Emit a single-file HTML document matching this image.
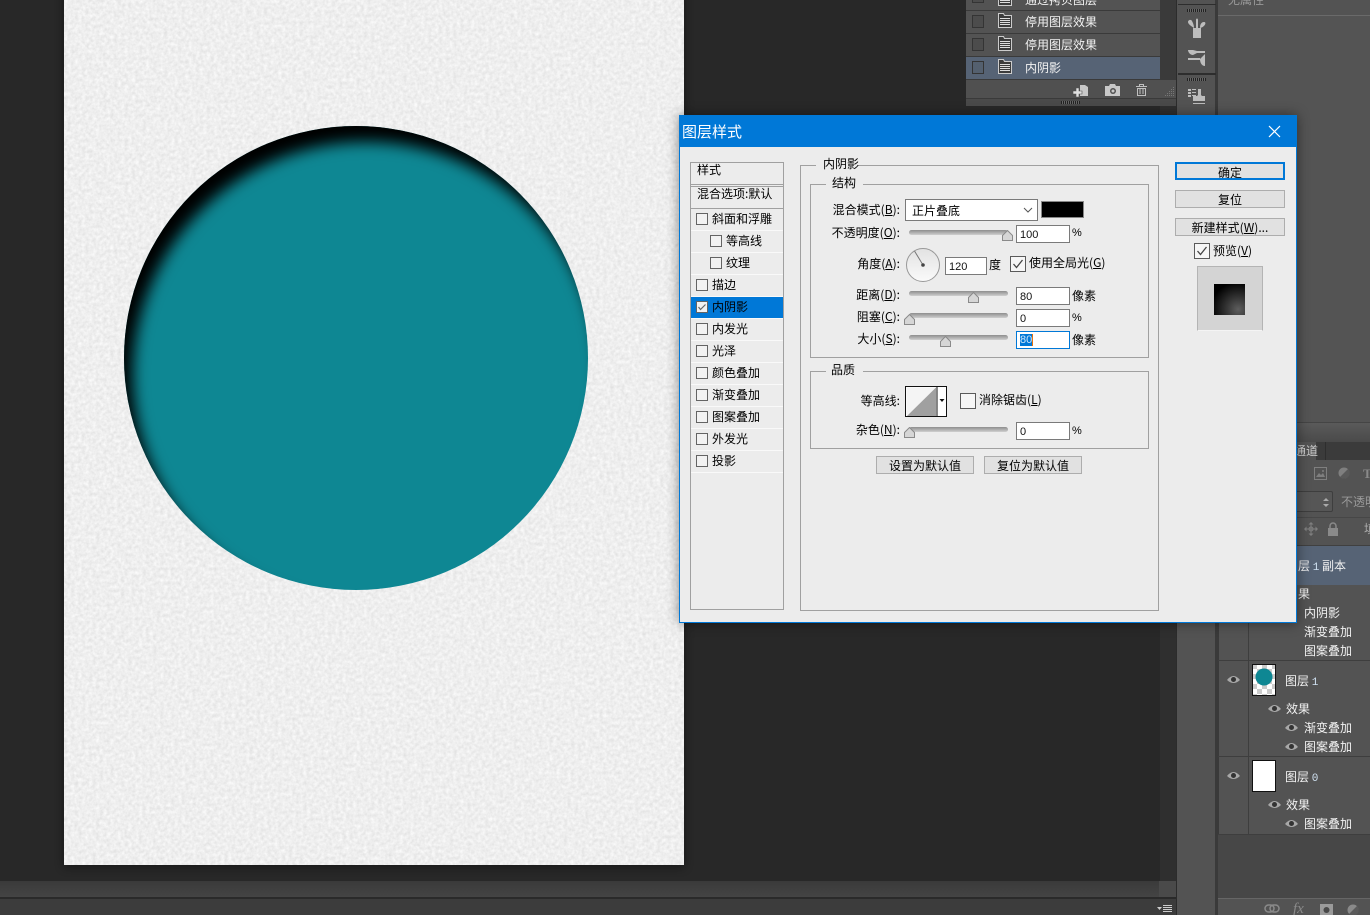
<!DOCTYPE html>
<html><head><meta charset="utf-8"><style>
html,body{margin:0;padding:0;background:#282828}
#r{position:relative;width:1370px;height:915px;overflow:hidden;background:#282828;font:12px/14px "WenQuanYi Zen Hei","Noto Sans CJK SC",sans-serif;color:#000}
#r div,#r svg,#r span.t{position:absolute}
.t{white-space:nowrap;font-size:12px;line-height:14px}
.w{color:#f2f2f2}.g{color:#bbb}
u{text-underline-offset:1px}
.n{font:11px "Liberation Mono",monospace;color:#cfe0f0}
.b{border:1px solid #a0a0a0;box-sizing:border-box}
.c{box-sizing:border-box;width:12px;height:12px;border:1px solid #646464;background:#f2f2f2}
.c2{box-sizing:border-box;width:16px;height:16px;border:1px solid #5a5a5a;background:#f6f6f6}
.sep{height:1px;background:#f9f9f9;left:691px;width:92px}
.i{box-sizing:border-box;background:#fff;border:1px solid #7a7a7a;width:54px;height:18px;left:1016px;padding-left:3px;font:11px/18px "Liberation Sans",sans-serif;color:#111}
.tr{left:909px;width:99px;height:5px;border-radius:3px;background:linear-gradient(#8e8e8e,#b4b4b4 60%,#d0d0d0)}
.btn{box-sizing:border-box;background:#e1e1e1;border:1px solid #adadad;text-align:center;line-height:17px;height:18px}
.lb{text-align:right;right:470px}
.h{left:966px;width:194px;height:22px;background:#535353}
</style></head><body><div id="r">

<!-- canvas -->
<svg style="left:0;top:0" width="1370" height="915" viewBox="0 0 1370 915">
<defs>
<filter id="n" x="0" y="0" width="100%" height="100%" color-interpolation-filters="sRGB"><feTurbulence type="fractalNoise" baseFrequency="0.28" numOctaves="3" seed="4"/><feColorMatrix values="0.13 0 0 0 0.87 0.13 0 0 0 0.87 0.13 0 0 0 0.87 0 0 0 0 1"/></filter>
<filter id="bl" x="-20%" y="-20%" width="140%" height="140%"><feGaussianBlur stdDeviation="7.500"/></filter>
<filter id="ds" x="-5%" y="-5%" width="110%" height="110%"><feGaussianBlur stdDeviation="5"/></filter>
<clipPath id="cc"><circle cx="356" cy="358" r="232"/></clipPath>
</defs>
<rect x="64" y="-8" width="620" height="875" fill="#000" opacity=".45" filter="url(#ds)"/>
<rect x="64" y="0" width="620" height="865" filter="url(#n)"/>
<circle cx="356" cy="358" r="232" fill="#0e8793"/>
<g clip-path="url(#cc)"><path fill-rule="evenodd" filter="url(#bl)" fill="#000" d="M0 0H800V700H0Z M366 142a233 233 0 1 0 .01 0Z"/></g>
</svg>

<!-- bottom bars -->
<div style="left:0;top:881px;width:1176px;height:16px;background:linear-gradient(#3a3a3a,#444)"></div>
<div style="left:0;top:897px;width:1176px;height:2px;background:#2a2a2a"></div>
<div style="left:0;top:899px;width:1176px;height:16px;background:#3c3c3c"></div>
<div style="left:1160px;top:0;width:16px;height:881px;background:#2f2f2f"></div>
<div style="left:1159px;top:881px;width:17px;height:16px;background:#4a4a4a"></div>
<svg style="left:1156px;top:904px" width="17" height="9"><path d="M1 3h5l-2.500 3z" fill="#ccc"/><path d="M7 1.500h9M7 3.500h9M7 5.500h9M7 7.500h9" stroke="#ccc" stroke-width="1"/></svg>

<!-- right dock -->
<div style="left:1176px;top:0;width:42px;height:915px;background:#2c2c2c"></div>
<div style="left:1177px;top:0;width:38px;height:915px;background:#535353"></div>
<div style="left:1215px;top:0;width:3px;height:915px;background:#3a3a3a"></div>
<div style="left:1178px;top:4px;width:38px;height:1px;background:#2d2d2d"></div>
<div style="left:1178px;top:73px;width:38px;height:2px;background:#2d2d2d"></div>
<div style="left:1187px;top:9px;width:19px;height:3px;background:repeating-linear-gradient(90deg,#222 0 1px,#666 1px 2px)"></div>
<div style="left:1187px;top:78px;width:19px;height:3px;background:repeating-linear-gradient(90deg,#222 0 1px,#666 1px 2px)"></div>
<svg style="left:1186px;top:17px" width="22" height="22"><path d="M7 11h8v10H7z" fill="#bdbdbd"/><path d="M8 11C5 9 2 7 2 5s3-3 4-1 2 4 2 7zM10 11V3c0-2 2-2 2 0v8zM14 11c0-3 1-6 4-6 3 0 1 5-4 6z" fill="#bdbdbd"/></svg>
<svg style="left:1187px;top:48px" width="22" height="20"><path d="M1 2h5l4 1h8v2H10L6 7C3 7 1 4 1 2z" fill="#bdbdbd"/><path d="M1 10h12v2H1zM13 11l5-5v12c-3 0-5-3-5-7z" fill="#bdbdbd"/></svg>
<svg style="left:1187px;top:87px" width="22" height="20"><path d="M1 2h3v2H1zM1 5h3v2H1zM1 8h3v2H1zM5 2h4v1H5zM5 5h4v1H5zM5 8h4v1H5z" fill="#bdbdbd"/><path d="M11 2h3v6l1 1h3v5H6V9h4l1-1z" fill="#bdbdbd"/><path d="M6 16h12v1H6z" fill="#bdbdbd"/></svg>

<!-- properties top-right -->
<div style="left:1218px;top:0;width:152px;height:15px;background:#535353"></div>
<div style="left:1218px;top:15px;width:152px;height:1px;background:#6a6a6a"></div>
<div style="left:1218px;top:16px;width:152px;height:426px;background:#545454"></div>
<span class="t" style="left:1228px;top:-7px;color:#999">无属性</span>

<!-- history -->
<div style="left:966px;top:0;width:210px;height:106px;background:#3a3a3a"></div>
<div class="h" style="top:-12px"></div>
<div class="h" style="top:11px"></div>
<div class="h" style="top:34px"></div>
<div class="h" style="top:57px;background:#566375"></div>
<span class="t w" style="left:1025px;top:-7px">通过拷贝图层</span>
<span class="t w" style="left:1025px;top:15px">停用图层效果</span>
<span class="t w" style="left:1025px;top:38px">停用图层效果</span>
<span class="t w" style="left:1025px;top:61px">内阴影</span>
<div style="left:972px;top:-9px;width:12px;height:12px;box-sizing:border-box;border:1px solid #343434;background:#4c4c4c"></div>
<div style="left:972px;top:15px;width:12px;height:13px;box-sizing:border-box;border:1px solid #343434;background:#4c4c4c"></div>
<div style="left:972px;top:38px;width:12px;height:13px;box-sizing:border-box;border:1px solid #343434;background:#4c4c4c"></div>
<div style="left:972px;top:61px;width:12px;height:13px;box-sizing:border-box;border:1px solid #343434;background:#54606f"></div>
<svg style="left:998px;top:-9px" width="15" height="16"><path d="M.5 .5h5l1 2h7v12H.5z" fill="#3c3c3c" stroke="#ccc"/><path d="M2 5.500h10M2 7.500h10M2 9.500h10M2 11.500h10" stroke="#ddd"/></svg>
<svg style="left:998px;top:13px" width="15" height="16"><path d="M.5 .5h5l1 2h7v12H.5z" fill="#3c3c3c" stroke="#ccc"/><path d="M2 5.500h10M2 7.500h10M2 9.500h10M2 11.500h10" stroke="#ddd"/></svg>
<svg style="left:998px;top:36px" width="15" height="16"><path d="M.5 .5h5l1 2h7v12H.5z" fill="#3c3c3c" stroke="#ccc"/><path d="M2 5.500h10M2 7.500h10M2 9.500h10M2 11.500h10" stroke="#ddd"/></svg>
<svg style="left:998px;top:59px" width="15" height="16"><path d="M.5 .5h5l1 2h7v12H.5z" fill="#3c3c3c" stroke="#ccc"/><path d="M2 5.500h10M2 7.500h10M2 9.500h10M2 11.500h10" stroke="#ddd"/></svg>
<div style="left:966px;top:80px;width:210px;height:18px;background:#505050"></div>
<div style="left:966px;top:99px;width:210px;height:7px;background:#4a4a4a"></div>
<div style="left:1061px;top:101px;width:19px;height:3px;background:repeating-linear-gradient(90deg,#222 0 1px,#666 1px 2px)"></div>
<svg style="left:1073px;top:84px" width="16" height="13"><path d="M7 1h5l3 2v9H7z" fill="#c8c8c8"/><path d="M0 7h3V4h3v3h3v3H6v3H3v-3H0z" fill="#e0e0e0" stroke="#505050" stroke-width=".6"/></svg>
<svg style="left:1105px;top:84px" width="16" height="12"><path d="M0 2h4l1-2h5l1 2h4v10H0z" fill="#c8c8c8"/><circle cx="8" cy="7" r="3" fill="#505050"/><circle cx="8" cy="7" r="1.500" fill="#c8c8c8"/></svg>
<svg style="left:1135px;top:83px" width="13" height="13"><path d="M1 3.500h11M4.500 3V1.500h4V3M2.500 5.500h8v7h-8zM5 6v5M8 6v5" fill="none" stroke="#c0c0c0"/></svg>
<svg style="left:1164px;top:86px" width="11" height="11" fill="#777"><path d="M9 1h1v1H9zM7 3h1v1H7zM9 3h1v1H9zM5 5h1v1H5zM7 5h1v1H7zM9 5h1v1H9zM3 7h1v1H3zM5 7h1v1H5zM7 7h1v1H7zM9 7h1v1H9zM1 9h1v1H1zM3 9h1v1H3zM5 9h1v1H5zM7 9h1v1H7zM9 9h1v1H9z"/></svg>

<!-- layers panel -->
<div style="left:1218px;top:442px;width:152px;height:473px;background:#535353"></div>
<div style="left:1218px;top:422px;width:152px;height:1px;background:#454545"></div>
<div style="left:1218px;top:423px;width:152px;height:19px;background:linear-gradient(#5a5a5a,#4a4a4a)"></div>
<div style="left:1218px;top:442px;width:152px;height:18px;background:#3b3b3b"></div>
<div style="left:1218px;top:442px;width:98px;height:19px;background:#535353"></div>
<div style="left:1325px;top:442px;width:1px;height:18px;background:#2e2e2e"></div>
<span class="t" style="left:1294px;top:444px;color:#ccc">通道</span>
<svg style="left:1314px;top:467px" width="13" height="13"><rect x=".5" y=".5" width="12" height="12" fill="none" stroke="#7f7f7f"/><path d="M2 10l3-4 2 2 2-2 2 4z" fill="#7f7f7f"/><circle cx="9" cy="4" r="1" fill="#7f7f7f"/></svg>
<svg style="left:1338px;top:467px" width="12" height="12"><circle cx="6" cy="6" r="5.500" fill="#7f7f7f"/><path d="M2 10L10 2A5.500 5.500 0 0 1 2 10z" fill="#5a5a5a"/></svg>
<span class="t" style="left:1363px;top:467px;color:#8a8a8a;font:bold 13px/14px 'Liberation Serif',serif">T</span>
<div style="left:1280px;top:491px;width:53px;height:21px;box-sizing:border-box;background:#565656;border:1px solid #3e3e3e;border-radius:2px"></div>
<svg style="left:1322px;top:497px" width="8" height="11"><path d="M1 4l3-3 3 3zM1 7l3 3 3-3z" fill="#aaa"/></svg>
<span class="t" style="left:1341px;top:495px;color:#9a9a9a">不透明</span>
<div style="left:1218px;top:517px;width:152px;height:1px;background:#474747"></div>
<svg style="left:1304px;top:522px" width="14" height="14"><path d="M7 .5v13M.5 7h13" stroke="#7f7f7f" stroke-width="1" fill="none"/><path d="M7 0l2.500 2.500h-5zM7 14l2.500-2.500h-5zM0 7l2.500-2.500v5zM14 7l-2.500-2.500v5z" fill="#7f7f7f"/><circle cx="7" cy="7" r="2" fill="none" stroke="#7f7f7f"/></svg>
<svg style="left:1327px;top:522px" width="12" height="14"><rect x="1" y="6" width="10" height="8" fill="#8a8a8a"/><path d="M3 6V4a3 3 0 0 1 6 0v2" fill="none" stroke="#8a8a8a" stroke-width="1.500"/></svg>
<span class="t" style="left:1364px;top:522px;color:#aaa">填</span>
<div style="left:1218px;top:545px;width:152px;height:1px;background:#404040"></div>
<div style="left:1218px;top:546px;width:152px;height:39px;background:#566375"></div>
<span class="t w" style="left:1298px;top:559px">层 <span class="n">1</span> 副本</span>
<span class="t w" style="left:1298px;top:587px">果</span>
<span class="t w" style="left:1304px;top:606px">内阴影</span>
<span class="t w" style="left:1304px;top:625px">渐变叠加</span>
<span class="t w" style="left:1304px;top:644px">图案叠加</span>
<div style="left:1218px;top:585px;width:1px;height:249px;background:#3a3a3a"></div>
<div style="left:1248px;top:585px;width:1px;height:249px;background:#3e3e3e"></div>
<div style="left:1218px;top:660px;width:152px;height:1px;background:#3e3e3e"></div>
<div style="left:1218px;top:756px;width:152px;height:1px;background:#3e3e3e"></div>
<div style="left:1218px;top:834px;width:152px;height:65px;background:#474747;border-top:1px solid #3e3e3e;box-sizing:border-box"></div>
<div style="left:1218px;top:898px;width:152px;height:1px;background:#666"></div>
<!-- thumbs -->
<svg style="left:1252px;top:664px" width="24" height="32"><defs><pattern id="ck" width="10" height="10" patternUnits="userSpaceOnUse"><rect width="10" height="10" fill="#fff"/><rect width="5" height="5" fill="#ccc"/><rect x="5" y="5" width="5" height="5" fill="#ccc"/></pattern></defs><rect width="24" height="32" fill="#111"/><rect x="1" y="1" width="22" height="30" fill="url(#ck)"/><circle cx="12" cy="13" r="8.500" fill="#0e8793"/></svg>
<div style="left:1252px;top:760px;width:24px;height:32px;box-sizing:border-box;background:#fff;border:1px solid #111"></div>
<span class="t w" style="left:1285px;top:674px">图层 <span class="n">1</span></span>
<span class="t w" style="left:1285px;top:770px">图层 <span class="n">0</span></span>
<span class="t w" style="left:1286px;top:702px">效果</span>
<span class="t w" style="left:1304px;top:721px">渐变叠加</span>
<span class="t w" style="left:1304px;top:740px">图案叠加</span>
<span class="t w" style="left:1286px;top:798px">效果</span>
<span class="t w" style="left:1304px;top:817px">图案叠加</span>
<!-- eyes -->
<svg style="left:1227px;top:675px" width="13" height="10"><path d="M0 5Q6.500-3 13 5 6.500 11 0 5z" fill="#a8a8a8"/><circle cx="6.500" cy="4.500" r="2.500" fill="#333"/></svg>
<svg style="left:1227px;top:771px" width="13" height="10"><path d="M0 5Q6.500-3 13 5 6.500 11 0 5z" fill="#a8a8a8"/><circle cx="6.500" cy="4.500" r="2.500" fill="#333"/></svg>
<svg style="left:1268px;top:704px" width="13" height="10"><path d="M0 5Q6.500-3 13 5 6.500 11 0 5z" fill="#a8a8a8"/><circle cx="6.500" cy="4.500" r="2.500" fill="#333"/></svg>
<svg style="left:1285px;top:723px" width="13" height="10"><path d="M0 5Q6.500-3 13 5 6.500 11 0 5z" fill="#a8a8a8"/><circle cx="6.500" cy="4.500" r="2.500" fill="#333"/></svg>
<svg style="left:1285px;top:742px" width="13" height="10"><path d="M0 5Q6.500-3 13 5 6.500 11 0 5z" fill="#a8a8a8"/><circle cx="6.500" cy="4.500" r="2.500" fill="#333"/></svg>
<svg style="left:1268px;top:800px" width="13" height="10"><path d="M0 5Q6.500-3 13 5 6.500 11 0 5z" fill="#a8a8a8"/><circle cx="6.500" cy="4.500" r="2.500" fill="#333"/></svg>
<svg style="left:1285px;top:819px" width="13" height="10"><path d="M0 5Q6.500-3 13 5 6.500 11 0 5z" fill="#a8a8a8"/><circle cx="6.500" cy="4.500" r="2.500" fill="#333"/></svg>
<!-- layer footer -->
<svg style="left:1264px;top:904px" width="16" height="10"><rect x="1" y="1" width="9" height="7" rx="3.500" fill="none" stroke="#8a8a8a" stroke-width="1.500"/><rect x="6" y="1" width="9" height="7" rx="3.500" fill="none" stroke="#8a8a8a" stroke-width="1.500"/></svg>
<span class="t" style="left:1293px;top:901px;color:#8a8a8a;font:italic 15px/16px 'Liberation Serif',serif">fx</span>
<svg style="left:1320px;top:904px" width="13" height="11"><rect width="13" height="11" fill="#9a9a9a"/><circle cx="6.500" cy="6" r="3" fill="#484848"/></svg>
<svg style="left:1347px;top:904px" width="12" height="11"><circle cx="6" cy="6" r="5.500" fill="#8a8a8a"/><path d="M2 10L10 2A5.500 5.500 0 0 1 2 10z" fill="#5a5a5a"/></svg>

<!-- dialog -->
<div style="left:679px;top:115px;width:618px;height:508px;box-sizing:border-box;background:#ececec;border:1px solid #0078d7;box-shadow:0 0 12px rgba(0,0,0,.45)"></div>
<div style="left:679px;top:115px;width:618px;height:32px;background:#0078d7"></div>
<span class="t" style="left:682px;top:124px;color:#fff;font-size:15px;line-height:16px">图层样式</span>
<svg style="left:1268px;top:125px" width="13" height="13"><path d="M1 1l11 11M12 1L1 12" stroke="#fff" stroke-width="1.200"/></svg>

<!-- list -->
<div class="b" style="left:690px;top:162px;width:94px;height:448px"></div>
<div style="left:691px;top:184px;width:92px;height:1px;background:#a0a0a0"></div>
<div style="left:691px;top:186px;width:92px;height:1px;background:#a0a0a0"></div>
<div style="left:691px;top:208px;width:92px;height:1px;background:#a0a0a0"></div>
<span class="t" style="left:697px;top:163px">样式</span>
<span class="t" style="left:697px;top:187px">混合选项:默认</span>
<div class="sep" style="top:230px"></div><div class="sep" style="top:252px"></div><div class="sep" style="top:274px"></div><div class="sep" style="top:296px"></div><div class="sep" style="top:318px"></div><div class="sep" style="top:340px"></div><div class="sep" style="top:362px"></div><div class="sep" style="top:384px"></div><div class="sep" style="top:406px"></div><div class="sep" style="top:428px"></div><div class="sep" style="top:450px"></div><div class="sep" style="top:472px"></div>
<div style="left:691px;top:297px;width:92px;height:21px;background:#0078d7"></div>
<div class="c" style="left:696px;top:213px"></div><span class="t" style="left:712px;top:212px">斜面和浮雕</span>
<div class="c" style="left:710px;top:235px"></div><span class="t" style="left:726px;top:234px">等高线</span>
<div class="c" style="left:710px;top:257px"></div><span class="t" style="left:726px;top:256px">纹理</span>
<div class="c" style="left:696px;top:279px"></div><span class="t" style="left:712px;top:278px">描边</span>
<div class="c" style="left:696px;top:301px"></div><svg style="left:697px;top:303px" width="10" height="9"><path d="M1.500 4l2 2.500 5-5" fill="none" stroke="#666" stroke-width="1.200"/></svg><span class="t" style="left:712px;top:300px">内阴影</span>
<div class="c" style="left:696px;top:323px"></div><span class="t" style="left:712px;top:322px">内发光</span>
<div class="c" style="left:696px;top:345px"></div><span class="t" style="left:712px;top:344px">光泽</span>
<div class="c" style="left:696px;top:367px"></div><span class="t" style="left:712px;top:366px">颜色叠加</span>
<div class="c" style="left:696px;top:389px"></div><span class="t" style="left:712px;top:388px">渐变叠加</span>
<div class="c" style="left:696px;top:411px"></div><span class="t" style="left:712px;top:410px">图案叠加</span>
<div class="c" style="left:696px;top:433px"></div><span class="t" style="left:712px;top:432px">外发光</span>
<div class="c" style="left:696px;top:455px"></div><span class="t" style="left:712px;top:454px">投影</span>

<!-- groups -->
<div class="b" style="left:800px;top:165px;width:359px;height:446px"></div>
<div style="left:816px;top:160px;width:42px;height:10px;background:#ececec"></div>
<span class="t" style="left:823px;top:157px">内阴影</span>
<div class="b" style="left:810px;top:184px;width:339px;height:174px"></div>
<div style="left:826px;top:180px;width:37px;height:10px;background:#ececec"></div>
<span class="t" style="left:832px;top:176px">结构</span>
<div class="b" style="left:810px;top:371px;width:339px;height:78px"></div>
<div style="left:826px;top:366px;width:37px;height:10px;background:#ececec"></div>
<span class="t" style="left:831px;top:363px">品质</span>

<span class="t lb" style="top:203px">混合模式(<u>B</u>):</span>
<span class="t lb" style="top:226px">不透明度(<u>O</u>):</span>
<span class="t lb" style="top:257px">角度(<u>A</u>):</span>
<span class="t lb" style="top:288px">距离(<u>D</u>):</span>
<span class="t lb" style="top:310px">阻塞(<u>C</u>):</span>
<span class="t lb" style="top:332px">大小(<u>S</u>):</span>
<span class="t lb" style="top:394px">等高线:</span>
<span class="t lb" style="top:423px">杂色(<u>N</u>):</span>

<div style="left:905px;top:199px;width:133px;height:22px;box-sizing:border-box;background:#fff;border:1px solid #7a7a7a"></div>
<span class="t" style="left:912px;top:204px">正片叠底</span>
<svg style="left:1023px;top:207px" width="10" height="6"><path d="M1 1l4 4 4-4" fill="none" stroke="#555"/></svg>
<div style="left:1041px;top:201px;width:43px;height:17px;box-sizing:border-box;background:#000;border:1px solid #888"></div>

<div class="tr" style="top:230px"></div>
<div class="tr" style="top:291px"></div>
<div class="tr" style="top:313px"></div>
<div class="tr" style="top:335px"></div>
<div class="tr" style="top:427px"></div>
<svg style="left:1002px;top:230px" width="11" height="11"><path d="M5.500.5l5 5v5H.5v-5z" fill="#d6d6d6" stroke="#8a8a8a"/></svg>
<svg style="left:968px;top:292px" width="11" height="11"><path d="M5.500.5l5 5v5H.5v-5z" fill="#d6d6d6" stroke="#8a8a8a"/></svg>
<svg style="left:904px;top:314px" width="11" height="11"><path d="M5.500.5l5 5v5H.5v-5z" fill="#d6d6d6" stroke="#8a8a8a"/></svg>
<svg style="left:940px;top:336px" width="11" height="11"><path d="M5.500.5l5 5v5H.5v-5z" fill="#d6d6d6" stroke="#8a8a8a"/></svg>
<svg style="left:904px;top:427px" width="11" height="11"><path d="M5.500.5l5 5v5H.5v-5z" fill="#d6d6d6" stroke="#8a8a8a"/></svg>

<div class="i" style="top:225px">100</div>
<span class="t" style="left:1072px;top:226px;font-family:'Liberation Sans',sans-serif;font-size:11px">%</span>
<svg style="left:905px;top:247px" width="36" height="36"><defs><linearGradient id="dg" x1="0" y1="0" x2="0" y2="1"><stop offset="0" stop-color="#e2e2e2"/><stop offset="1" stop-color="#fafafa"/></linearGradient></defs><circle cx="18" cy="18" r="16.500" fill="url(#dg)" stroke="#999"/><path d="M18 18L9.500 4" stroke="#777"/><circle cx="18" cy="18" r="1.800" fill="#444"/></svg>
<div class="i" style="left:945px;top:257px;width:42px;height:18px">120</div>
<span class="t" style="left:989px;top:258px">度</span>
<div class="c2" style="left:1010px;top:256px"></div><svg style="left:1012px;top:258px" width="12" height="12"><path d="M1.500 6l3 3.500 6-7.500" fill="none" stroke="#444" stroke-width="1.300"/></svg>
<span class="t" style="left:1029px;top:256px">使用全局光(<u>G</u>)</span>
<div class="i" style="top:287px">80</div>
<span class="t" style="left:1072px;top:289px">像素</span>
<div class="i" style="top:309px">0</div>
<span class="t" style="left:1072px;top:311px;font-family:'Liberation Sans',sans-serif;font-size:11px">%</span>
<div class="i" style="top:331px;border-color:#0078d7"></div>
<div style="left:1020px;top:334px;width:12px;height:12px;background:#0078d7"></div>
<div style="left:1032px;top:334px;width:1px;height:12px;background:#e8700a"></div>
<span class="t" style="left:1020px;top:333px;color:#cfe6fa;font:11px/14px 'Liberation Sans',sans-serif">80</span>
<span class="t" style="left:1072px;top:333px">像素</span>

<svg style="left:905px;top:386px" width="42" height="31"><rect x=".5" y=".5" width="41" height="30" fill="#fff" stroke="#111"/><rect x="1.500" y="1.500" width="30" height="28" fill="#f4f4f4"/><path d="M2 30L31 1.500V30z" fill="#a0a0a0"/><path d="M32 1v29" stroke="#111"/><path d="M34.500 13h5l-2.500 3z" fill="#111"/></svg>
<div class="c2" style="left:960px;top:393px"></div>
<span class="t" style="left:979px;top:393px">消除锯齿(<u>L</u>)</span>
<div class="i" style="top:422px">0</div>
<span class="t" style="left:1072px;top:424px;font-family:'Liberation Sans',sans-serif;font-size:11px">%</span>
<div class="btn" style="left:876px;top:456px;width:98px">设置为默认值</div>
<div class="btn" style="left:984px;top:456px;width:98px">复位为默认值</div>

<div class="btn" style="left:1175px;top:162px;width:110px;border:2px solid #0078d7;line-height:17px">确定</div>
<div class="btn" style="left:1175px;top:190px;width:110px">复位</div>
<div class="btn" style="left:1175px;top:218px;width:110px">新建样式(<u>W</u>)...</div>
<div class="c2" style="left:1194px;top:243px"></div><svg style="left:1196px;top:245px" width="12" height="12"><path d="M1.500 6l3 3.500 6-7.500" fill="none" stroke="#444" stroke-width="1.300"/></svg>
<span class="t" style="left:1213px;top:244px">预览(<u>V</u>)</span>
<div style="left:1197px;top:266px;width:66px;height:65px;box-sizing:border-box;background:#d4d4d4;border:1px solid #b4b4b4;border-bottom-color:#f4f4f4"></div>
<div style="left:1214px;top:284px;width:31px;height:31px;background:radial-gradient(circle at 78% 82%,#5e5e5e,#333 35%,#000 78%)"></div>

</div></body></html>
